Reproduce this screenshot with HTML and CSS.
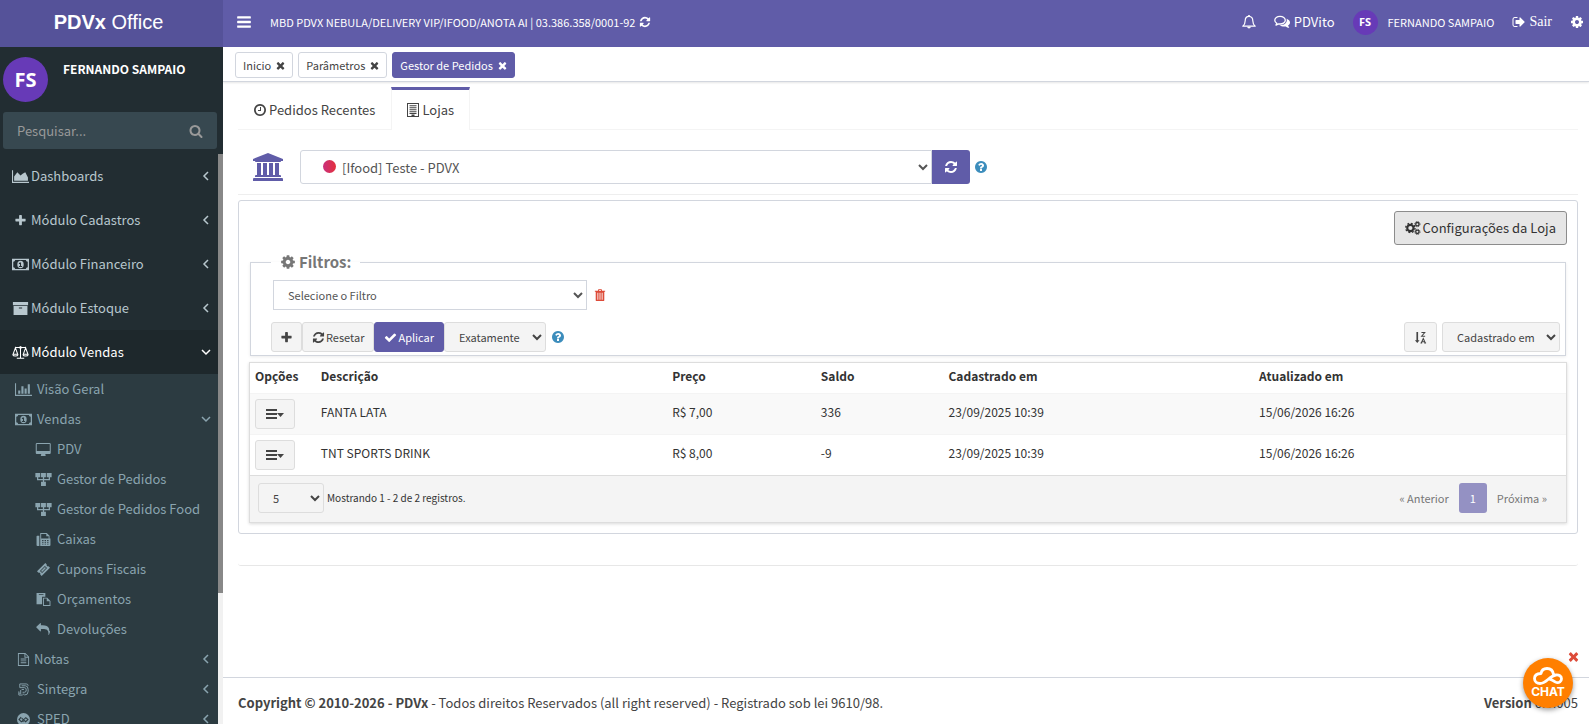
FILE: index.html
```
<!DOCTYPE html>
<html lang="pt-BR">
<head>
  <meta charset="UTF-8">
  <title>PDVx Office</title>
  <link rel="stylesheet" href="styles.css">
</head>
<body>
  <!-- Icon sprite -->
  <svg class="sprite" aria-hidden="true">
    <symbol id="i-bars" viewBox="0 0 1792 1792"><path d="M1664 1344v128q0 26-19 45t-45 19h-1408q-26 0-45-19t-19-45v-128q0-26 19-45t45-19h1408q26 0 45 19t19 45zm0-512v128q0 26-19 45t-45 19h-1408q-26 0-45-19t-19-45v-128q0-26 19-45t45-19h1408q26 0 45 19t19 45zm0-512v128q0 26-19 45t-45 19h-1408q-26 0-45-19t-19-45v-128q0-26 19-45t45-19h1408q26 0 45 19t19 45z"/></symbol>
    <symbol id="i-times" viewBox="190 190 1412 1412"><path d="M1490 1322q0 40-28 68l-136 136q-28 28-68 28t-68-28l-294-294-294 294q-28 28-68 28t-68-28l-136-136q-28-28-28-68t28-68l294-294-294-294q-28-28-28-68t28-68l136-136q28-28 68-28t68 28l294 294 294-294q28-28 68-28t68 28l136 136q28 28 28 68t-28 68l-294 294 294 294q28 28 28 68z"/></symbol>
    <symbol id="i-plus" viewBox="0 0 1792 1792"><path d="M1600 736v192q0 40-28 68t-68 28h-416v416q0 40-28 68t-68 28h-192q-40 0-68-28t-28-68v-416h-416q-40 0-68-28t-28-68v-192q0-40 28-68t68-28h416v-416q0-40 28-68t68-28h192q40 0 68 28t28 68v416h416q40 0 68 28t28 68z"/></symbol>
    <symbol id="i-check" viewBox="0 0 1792 1792"><path d="M1671 566q0 40-28 68l-724 724-136 136q-28 28-68 28t-68-28l-136-136-362-362q-28-28-28-68t28-68l136-136q28-28 68-28t68 28l294 295 656-657q28-28 68-28t68 28l136 136q28 28 28 68z"/></symbol>
    <symbol id="i-refresh" viewBox="0 0 1792 1792"><path d="M1639 1056q0 5-1 7-64 268-268 434.5t-478 166.5q-146 0-282.5-55t-243.5-157l-129 129q-19 19-45 19t-45-19-19-45v-448q0-26 19-45t45-19h448q26 0 45 19t19 45-19 45l-137 137q71 66 161 102t187 36q134 0 250-65t186-179q11-17 53-117 8-23 30-23h192q13 0 22.5 9.5t9.5 22.5zm25-800v448q0 26-19 45t-45 19h-448q-26 0-45-19t-19-45 19-45l138-138q-148-137-349-137-134 0-250 65t-186 179q-11 17-53 117-8 23-30 23h-199q-13 0-22.5-9.5t-9.5-22.5v-7q65-268 270-434.5t480-166.5q146 0 284 55.5t245 156.5l130-129q19-19 45-19t45 19 19 45z"/></symbol>
    <symbol id="i-cog" viewBox="0 0 1792 1792"><path d="M1152 896q0-106-75-181t-181-75-181 75-75 181 75 181 181 75 181-75 75-181zm512-109v222q0 12-8 23t-20 13l-185 28q-19 54-39 91 35 50 107 138 10 12 10 25t-9 23q-27 37-99 108t-94 71q-12 0-26-9l-138-108q-44 23-91 38-16 136-29 186-7 28-36 28h-222q-14 0-24.5-8.5t-11.5-21.5l-28-184q-49-16-90-37l-141 107q-10 9-25 9-14 0-25-11-126-114-165-168-7-10-7-23 0-12 8-23 15-21 51-66.5t54-70.5q-27-50-41-99l-183-27q-13-2-21-12.5t-8-23.5v-222q0-12 8-23t19-13l186-28q14-46 39-92-40-57-107-138-10-12-10-24 0-10 9-23 26-36 98.5-107.5t94.5-71.5q13 0 26 10l138 107q44-23 91-38 16-136 29-186 7-28 36-28h222q14 0 24.5 8.5t11.5 21.5l28 184q49 16 90 37l142-107q9-9 24-9 13 0 25 10 129 119 165 170 7 8 7 22 0 12-8 23-15 21-51 66.5t-54 70.5q26 50 41 98l183 28q13 2 21 12.5t8 23.5z"/></symbol>
    <symbol id="i-cogs" viewBox="0 0 18 16"><g fill="none" stroke="currentColor"><circle cx="6" cy="8" r="3.6" stroke-width="2.4"/><circle cx="6" cy="8" r="5.3" stroke-width="1.6" stroke-dasharray="2.1 2.06"/><circle cx="14" cy="3.6" r="1.9" stroke-width="1.5"/><circle cx="14" cy="3.6" r="3" stroke-width="1" stroke-dasharray="1.3 1.06"/><circle cx="14" cy="12.4" r="1.9" stroke-width="1.5"/><circle cx="14" cy="12.4" r="3" stroke-width="1" stroke-dasharray="1.3 1.06"/></g></symbol>
    <symbol id="i-search" viewBox="0 0 1792 1792"><path d="M1216 832q0-185-131.5-316.5t-316.5-131.5-316.5 131.5-131.5 316.5 131.5 316.5 316.5 131.5 316.5-131.5 131.5-316.5zm512 832q0 52-38 90t-90 38q-54 0-90-38l-343-342q-179 124-399 124-143 0-273.5-55.5t-225-150-150-225-55.5-273.5 55.5-273.5 150-225 225-150 273.5-55.5 273.5 55.5 225 150 150 225 55.5 273.5q0 220-124 399l343 343q37 37 37 90z"/></symbol>
    <symbol id="i-help" viewBox="128 128 1536 1536"><path d="M1024 1376v-192q0-14-9-23t-23-9h-192q-14 0-23 9t-9 23v192q0 14 9 23t23 9h192q14 0 23-9t9-23zm256-672q0-88-55.5-163t-138.5-116-170-41q-243 0-371 213-15 24 8 42l132 100q7 6 19 6 16 0 25-12 53-68 86-92 34-24 86-24 48 0 85.5 26t37.5 59q0 38-20 61t-68 45q-63 28-115.5 86.5t-52.5 125.5v36q0 14 9 23t23 9h192q14 0 23-9t9-23q0-19 21.5-49.5t54.5-49.5q32-18 49-28.5t46-35 44.5-48 28-60.5 12.5-81zm384 192q0 209-103 385.5t-279.5 279.5-385.5 103-385.5-103-279.5-279.5-103-385.5 103-385.5 279.5-279.5 385.5-103 385.5 103 279.5 279.5 103 385.5z"/></symbol>
    <symbol id="i-clock" viewBox="128 128 1536 1536"><path d="M1024 544v448q0 14-9 23t-23 9h-320q-14 0-23-9t-9-23v-64q0-14 9-23t23-9h224v-352q0-14 9-23t23-9h64q14 0 23 9t9 23zm416 352q0-148-73-273t-198-198-273-73-273 73-198 198-73 273 73 273 198 198 273 73 273-73 198-198 73-273zm224 0q0 209-103 385.5t-279.5 279.5-385.5 103-385.5-103-279.5-279.5-103-385.5 103-385.5 279.5-279.5 385.5-103 385.5 103 279.5 279.5 103 385.5z"/></symbol>
    <symbol id="i-out" viewBox="0 0 1792 1792"><path d="M704 1440q0 4 1 20t.5 26.5-3 23.5-10 19.5-20.5 6.5h-320q-119 0-203.5-84.5t-84.5-203.5v-704q0-119 84.5-203.5t203.5-84.5h320q13 0 22.5 9.5t9.5 22.5q0 4 1 20t.5 26.5-3 23.5-10 19.5-20.5 6.5h-320q-66 0-113 47t-47 113v704q0 66 47 113t113 47h312l11.5 1 11.5 3 8 5.5 7 9 2 13.5zm928-544q0 26-19 45l-544 544q-19 19-45 19t-45-19-19-45v-288h-448q-26 0-45-19t-19-45v-384q0-26 19-45t45-19h448v-288q0-26 19-45t45-19 45 19l544 544q19 19 19 45z"/></symbol>
    <symbol id="i-trash" viewBox="0 0 12 14"><path fill-rule="evenodd" d="M4 .5Q4.200 0 4.800 0h2.400q.6 0 .8.5L8.500 2H12v1.300h-1V13q0 1-1 1H2q-1 0-1-1V3.300H0V2h3.500zM5 1l-.3 1h2.600L7 1zM3 4.500v8h1v-8zm2.500 0v8h1v-8zm2.500 0v8h1v-8z"/></symbol>
    <symbol id="i-bank" viewBox="0 0 1920 1792"><path d="M960 0l960 384v128h-128q0 26-20.5 45t-48.5 19h-1526q-28 0-48.5-19t-20.5-45h-128v-128zm-704 640h256v768h128v-768h256v768h128v-768h256v768h128v-768h256v768h59q28 0 48.5 19t20.5 45v64h-1664v-64q0-26 20.5-45t48.5-19h59v-768zm1595 960q28 0 48.5 19t20.5 45v128h-1920v-128q0-26 20.5-45t48.5-19h1782z"/></symbol>
    <symbol id="i-reply" viewBox="0 0 1792 1792"><path d="M1792 1120q0 166-127 451-3 7-10.5 24t-13.5 30-13 22q-12 17-28 17-15 0-23.5-10t-8.5-25q0-9 2.5-26.5t2.5-23.5q5-68 5-123 0-112-19.5-200.5t-54-153.5-89-112-117-79-150.5-46.5-176.5-23-208-6.500h-224v256q0 26-19 45t-45 19-45-19l-512-512q-19-19-19-45t19-45l512-512q19-19 45-19t45 19 19 45v256h224q713 0 875 403 53 134 53 333z"/></symbol>
    <symbol id="i-desktop" viewBox="0 0 1856 1664"><path d="M1728 992v-832q0-13-9.5-22.5t-22.5-9.500h-1600q-13 0-22.5 9.500t-9.500 22.500v832q0 13 9.500 22.500t22.500 9.500h1600q13 0 22.500-9.500t9.500-22.500zm128-832v1088q0 66-47 113t-113 47h-544q0 37 16 77.500t32 71 16 43.500q0 26-19 45t-45 19h-512q-26 0-45-19t-19-45q0-14 16-44t32-70 16-78h-544q-66 0-113-47t-47-113v-1088q0-66 47-113t113-47h1600q66 0 113 47t47 113z"/></symbol>
    <symbol id="i-area" viewBox="0 0 16 12"><path d="M0 0h1v11h15v1H0zM2 10V6l3-4 3 3 2-1.500 2.500-1.500L15 7v3z"/></symbol>
    <symbol id="i-bar-chart" viewBox="0 0 16 12"><path d="M0 0h1v11h15v1H0zM3 7h2v3H3zM6 3h2v7H6zM9 5h2v5H9zM12 1h2v9h-2z"/></symbol>
    <symbol id="i-money" viewBox="0 0 16 11"><path fill-rule="evenodd" d="M0 0h16v11H0zM3 1.200A2 2 0 0 1 1.200 3v5A2 2 0 0 1 3 9.800h10A2 2 0 0 1 14.800 8V3A2 2 0 0 1 13 1.200zM8 2a3 3.500 0 1 1 0 7 3 3.500 0 1 1 0-7zM7.500 3.500L6.500 4.200v.8h1V7h-1v.8h3V7h-1V3.500z"/></symbol>
    <symbol id="i-archive" viewBox="0 0 14 12"><path fill-rule="evenodd" d="M0 0h14v3H0zM.6 3.800h12.800V12H.6zM5.500 5v1h3V5z"/></symbol>
    <symbol id="i-scale" viewBox="0 0 18 14"><path fill="none" stroke="currentColor" stroke-width="1.100" d="M3 1.700h12M9 .5V13M5 13.300h8M3.500 2L1 9h5zM14.500 2L12 9h5zM.6 9.200c.5 2.200 5.200 2.200 5.800 0M11.600 9.200c.5 2.200 5.200 2.200 5.800 0"/><circle cx="9" cy="1.700" r="1.400"/></symbol>
    <symbol id="i-flow" viewBox="0 0 15 12"><path d="M0 0h4.500v4H0zM5.200 0h4.500v4H5.200zM10.500 0H15v4h-4.500zM5.200 8h4.500v4H5.200zM1.500 4h1.200v1.500h4.200V4h1.200v1.500h4.200V4h1.200v2.700H8.100V8H6.900V6.700H1.500z"/></symbol>
    <symbol id="i-fax" viewBox="0 0 15 14"><path fill-rule="evenodd" d="M0 3.500Q0 3 .6 3H3v11H1Q0 14 0 13zM4 0h7l3 3v3h1v7q0 1-1 1H4zM5 1v5h8V3.600h-2.500V1zM6 7.500v1h1.500v-1zm2.700 0v1h1.500v-1zm2.700 0v1h1.500v-1zM6 9.500v1h1.500v-1zm2.700 0v1h1.500v-1zm2.700 0v1h1.500v-1zM6 11.500v1h1.500v-1zm2.700 0v1h1.500v-1zm2.700 0v1h1.500v-1z"/></symbol>
    <symbol id="i-ticket" viewBox="0 0 14 14"><path fill-rule="evenodd" d="M9 0l1.500 1.500a1.500 1.500 0 0 0 2 2L14 5 5 14l-1.500-1.500a1.500 1.500 0 0 0-2-2L0 9zM8.500 3.200L3.200 8.500l2.300 2.300 5.300-5.300zM8.500 4.300l1.200 1.200-4.200 4.200-1.200-1.200z"/></symbol>
    <symbol id="i-paste" viewBox="0 0 15 14"><path fill-rule="evenodd" d="M0 0h9.500v4H6v8H0zM2.500 1v1h5V1zM7 5h4.500L15 8.500V14H7zM8 6v7h6V9h-3V6z"/></symbol>
    <symbol id="i-file" viewBox="0 0 12 14"><path fill-rule="evenodd" d="M0 0h8l4 4v10H0zM1 1v12h10V5H7V1zM8 1.300V4h2.700zM3 6h6v1H3zM3 8h6v1H3zM3 10h6v1H3z"/></symbol>
    <symbol id="i-building" viewBox="0 0 12 14"><path fill-rule="evenodd" d="M0 0h12v14H0zM1 1v12h3.500v-1.500h3V13H11V1zM2.500 2.200h7v1h-7zM2.500 4.200h7v1h-7zM2.500 6.200h7v1h-7zM2.500 8.200h7v1h-7zM2.500 10h7v1h-7z"/></symbol>
    <symbol id="i-sintegra" viewBox="0 0 12 14"><path fill="none" stroke="currentColor" stroke-width="1" d="M2 1h7M2 1v4M4 3h4q3 0 3 4v2q0 4-4 4M2 5h5q2 0 2 2.500T7 10H5M4 7h2.500M3 7.500V12M1 9v4h4M5 12h2M1 11h1M9 1q2 0 2 2"/></symbol>
    <symbol id="i-sped" viewBox="0 0 14 14"><circle cx="7" cy="7" r="7"/><path fill="none" stroke="#2c3b41" stroke-width="1.200" d="M4.500 4.500L2.200 7l2.500 2.500L9.500 5l2.300 2-2.500 2.500L5 5.500M6 8.500l1 1M8.500 9.500l1-1"/></symbol>
    <symbol id="i-bell" viewBox="0 0 14 14"><path fill="none" stroke="currentColor" stroke-width="1.200" stroke-linejoin="round" d="M7 1.400c-2.600 0-3.800 2-3.800 4.400 0 3.200-1 4.300-2.400 5.400h12.400c-1.400-1.100-2.400-2.200-2.400-5.400C10.800 3.400 9.600 1.400 7 1.400z"/><path d="M6.200 0h1.600v1.500H6.200zM5.200 11.700h3.600a1.800 1.800 0 0 1-3.600 0z"/></symbol>
    <symbol id="i-chat" viewBox="0 0 16 13"><path fill="none" stroke="currentColor" stroke-width="1.300" stroke-linejoin="round" d="M6 .8C3 .8.800 2.500.800 4.700c0 1.300.8 2.400 2 3.100L2 9.600l2.700-1.200c4 .5 6.600-1.300 6.600-3.700C11.300 2.500 9 .8 6 .8z"/><path d="M12.600 3.300c2 .7 3.400 2 3.400 3.600 0 1.300-.8 2.300-2 3.100l1.300 2.300c-1.500 0-2.700-.6-3.500-1.400-2.300.4-4.600 0-6.300-1.200 4.500.3 8.200-2 7.100-6.400z"/></symbol>
    <symbol id="i-left" viewBox="0 0 10 10"><path fill="none" stroke="currentColor" stroke-width="1.500" d="M7 1L3 5l4 4"/></symbol>
    <symbol id="i-down" viewBox="0 0 10 10"><path fill="none" stroke="currentColor" stroke-width="1.500" d="M1 3l4 4 4-4"/></symbol>
    <symbol id="i-menu-caret" viewBox="0 0 18 10"><path d="M0 0h11v2H0zM0 4h11v2H0zM0 8h11v2H0zM11 4h7l-3.500 4z"/></symbol>
    <symbol id="i-sort" viewBox="0 0 12 14"><path d="M1.600 1h1.800v9H5l-2.500 3L0 10h1.600z"/><path fill="none" stroke="currentColor" stroke-width="1.100" d="M7 1.600h3.600L7.200 5.600H11M6.800 13L9 8l2.200 5M7.600 11.500h2.800M6 13h1.800M10 13h2"/></symbol>
    <symbol id="i-cloud" viewBox="0 0 30 18"><path fill="none" stroke="currentColor" stroke-width="2.800" stroke-linecap="round" stroke-linejoin="round" d="M20.500 7.500C20 4 17.500 1.500 14 1.500c-3 0-5.500 1.800-6 5-3 .2-6.500 1.500-6.500 5 0 3.200 2.500 5 5.500 5 6.500 0 9-7.500 16-8.500 3-.4 5.500 1.200 5.500 3.800 0 2.700-2.500 4.200-5 3.700-3-.6-4-3-7-3.500"/></symbol>
  </svg>

  <div class="wrapper">
    <!-- Left: logo and menu -->
    <aside class="sidebar">
      <a href="#" class="logo"><b>PDVx</b>&nbsp;Office</a>
      <div class="user-panel">
        <span class="avatar">FS</span>
        <strong>FERNANDO SAMPAIO</strong>
      </div>
      <form class="search">
        <input type="text" placeholder="Pesquisar..." aria-label="Pesquisar">
        <button type="button" aria-label="Buscar"><svg class="icon"><use href="#i-search"/></svg></button>
      </form>
      <div class="menu-scroll">
        <ul class="menu">
          <li><a href="#"><svg class="icon"><use href="#i-area"/></svg><span>Dashboards</span><svg class="arrow"><use href="#i-left"/></svg></a></li>
          <li><a href="#"><svg class="icon"><use href="#i-plus"/></svg><span>Módulo Cadastros</span><svg class="arrow"><use href="#i-left"/></svg></a></li>
          <li><a href="#"><svg class="icon"><use href="#i-money"/></svg><span>Módulo Financeiro</span><svg class="arrow"><use href="#i-left"/></svg></a></li>
          <li><a href="#"><svg class="icon"><use href="#i-archive"/></svg><span>Módulo Estoque</span><svg class="arrow"><use href="#i-left"/></svg></a></li>
          <li class="active">
            <a href="#"><svg class="icon"><use href="#i-scale"/></svg><span>Módulo Vendas</span><svg class="arrow"><use href="#i-down"/></svg></a>
            <ul class="submenu">
              <li><a href="#"><svg class="icon"><use href="#i-bar-chart"/></svg><span>Visão Geral</span></a></li>
              <li>
                <a href="#"><svg class="icon"><use href="#i-money"/></svg><span>Vendas</span><svg class="arrow"><use href="#i-down"/></svg></a>
                <ul class="submenu-inner">
                  <li><a href="#"><svg class="icon"><use href="#i-desktop"/></svg><span>PDV</span></a></li>
                  <li><a href="#"><svg class="icon"><use href="#i-flow"/></svg><span>Gestor de Pedidos</span></a></li>
                  <li><a href="#"><svg class="icon"><use href="#i-flow"/></svg><span>Gestor de Pedidos Food</span></a></li>
                  <li><a href="#"><svg class="icon"><use href="#i-fax"/></svg><span>Caixas</span></a></li>
                  <li><a href="#"><svg class="icon"><use href="#i-ticket"/></svg><span>Cupons Fiscais</span></a></li>
                  <li><a href="#"><svg class="icon"><use href="#i-paste"/></svg><span>Orçamentos</span></a></li>
                  <li><a href="#"><svg class="icon"><use href="#i-reply"/></svg><span>Devoluções</span></a></li>
                </ul>
              </li>
              <li><a href="#" class="tight"><svg class="icon"><use href="#i-file"/></svg><span>Notas</span><svg class="arrow"><use href="#i-left"/></svg></a></li>
              <li><a href="#"><svg class="icon"><use href="#i-sintegra"/></svg><span>Sintegra</span><svg class="arrow"><use href="#i-left"/></svg></a></li>
              <li><a href="#"><svg class="icon"><use href="#i-sped"/></svg><span>SPED</span><svg class="arrow"><use href="#i-left"/></svg></a></li>
            </ul>
          </li>
        </ul>
        <div class="rail"><div class="rail-thumb"></div></div>
      </div>
    </aside>

    <div class="main">
      <header class="navbar">
        <button type="button" class="toggle" aria-label="Menu"><svg class="icon icon-lg"><use href="#i-bars"/></svg></button>
        <a href="#" class="company">MBD PDVX NEBULA/DELIVERY VIP/IFOOD/ANOTA AI | 03.386.358/0001-92 <svg class="icon"><use href="#i-refresh"/></svg></a>
        <nav class="nav-right">
          <a href="#" aria-label="Notificações"><svg class="icon"><use href="#i-bell"/></svg></a>
          <a href="#" class="pdvito"><svg class="icon"><use href="#i-chat"/></svg>PDVito</a>
          <a href="#" class="nav-user"><span class="avatar avatar-sm">FS</span>FERNANDO SAMPAIO</a>
          <a href="#" class="logout"><svg class="icon"><use href="#i-out"/></svg>Sair</a>
          <a href="#" aria-label="Configurações"><svg class="icon"><use href="#i-cog"/></svg></a>
        </nav>
      </header>

      <div class="page-tabs">
        <button type="button" class="page-tab">Inicio <svg class="icon"><use href="#i-times"/></svg></button>
        <button type="button" class="page-tab">Parâmetros <svg class="icon"><use href="#i-times"/></svg></button>
        <button type="button" class="page-tab current">Gestor de Pedidos <svg class="icon"><use href="#i-times"/></svg></button>
      </div>

      <main class="content">
        <div class="box">
          <div class="nav-tabs">
            <a href="#" class="nav-tab"><svg class="icon"><use href="#i-clock"/></svg>Pedidos Recentes</a>
            <a href="#" class="nav-tab current"><svg class="icon"><use href="#i-building"/></svg>Lojas</a>
          </div>

          <div class="store-row">
            <svg class="bank"><use href="#i-bank"/></svg>
            <div class="store-select">
              <span class="dot"></span>
              <select aria-label="Loja"><option>[Ifood] Teste - PDVX</option></select>
              <button type="button" aria-label="Atualizar"><svg class="icon"><use href="#i-refresh"/></svg></button>
            </div>
            <svg class="help"><use href="#i-help"/></svg>
          </div>

          <section class="panel">
            <div class="panel-actions">
              <button type="button" class="btn-config"><svg class="icon icon-wide"><use href="#i-cogs"/></svg>Configurações da Loja</button>
            </div>

            <fieldset class="filters">
              <legend><svg class="icon"><use href="#i-cog"/></svg>Filtros:</legend>
              <div class="filter-row">
                <select class="filter-select" aria-label="Filtro"><option>Selecione o Filtro</option></select>
                <button type="button" class="btn-trash" aria-label="Remover filtro"><svg class="icon"><use href="#i-trash"/></svg></button>
              </div>
              <div class="filter-actions">
                <button type="button" class="btn btn-plus" aria-label="Adicionar"><svg class="icon"><use href="#i-plus"/></svg></button>
                <button type="button" class="btn btn-reset"><svg class="icon"><use href="#i-refresh"/></svg>Resetar</button>
                <button type="button" class="btn btn-apply"><svg class="icon"><use href="#i-check"/></svg>Aplicar</button>
                <select class="btn mode-select" aria-label="Modo"><option>Exatamente</option></select>
                <svg class="help"><use href="#i-help"/></svg>
                <button type="button" class="btn btn-sort" aria-label="Ordem"><svg class="icon"><use href="#i-sort"/></svg></button>
                <select class="btn order-select" aria-label="Ordenar por"><option>Cadastrado em</option></select>
              </div>
            </fieldset>

            <div class="grid">
              <table>
                <thead>
                  <tr>
                    <th class="col-opt">Opções</th>
                    <th class="col-desc">Descrição</th>
                    <th class="col-price">Preço</th>
                    <th class="col-stock">Saldo</th>
                    <th class="col-date">Cadastrado em</th>
                    <th>Atualizado em</th>
                  </tr>
                </thead>
                <tbody>
                  <tr>
                    <td class="cell-opt"><button type="button" class="btn btn-row" aria-label="Opções"><svg class="caret"><use href="#i-menu-caret"/></svg></button></td>
                    <td>FANTA LATA</td>
                    <td>R$ 7,00</td>
                    <td>336</td>
                    <td>23/09/2025 10:39</td>
                    <td>15/06/2026 16:26</td>
                  </tr>
                  <tr>
                    <td class="cell-opt"><button type="button" class="btn btn-row" aria-label="Opções"><svg class="caret"><use href="#i-menu-caret"/></svg></button></td>
                    <td>TNT SPORTS DRINK</td>
                    <td>R$ 8,00</td>
                    <td>-9</td>
                    <td>23/09/2025 10:39</td>
                    <td>15/06/2026 16:26</td>
                  </tr>
                </tbody>
              </table>
              <div class="grid-footer">
                <select class="btn size-select" aria-label="Registros por página"><option>5</option></select>
                <span class="grid-info">Mostrando 1 - 2 de 2 registros.</span>
                <div class="pager">
                  <button type="button">« Anterior</button>
                  <button type="button" class="current">1</button>
                  <button type="button">Próxima »</button>
                </div>
              </div>
            </div>
          </section>
        </div>
      </main>

      <footer class="footer">
        <span><strong>Copyright © 2010-2026 - PDVx</strong> - Todos direitos Reservados (all right reserved) - Registrado sob lei 9610/98.</span>
        <span><strong>Version</strong> 6.0.005</span>
      </footer>
    </div>
  </div>

  <!-- Floating chat -->
  <div class="chat">
    <button type="button" class="chat-close" aria-label="Fechar chat"><svg class="icon"><use href="#i-times"/></svg></button>
    <button type="button" class="chat-open"><svg class="cloud"><use href="#i-cloud"/></svg>CHAT</button>
  </div>
</body>
</html>
```

FILE: styles.css
```
* {
  box-sizing: border-box;
}
body {
  margin: 0;
  font-family: "Noto Sans CJK SC", "Noto Sans", sans-serif;
  font-size: 13px;
  line-height: 20px;
  color: #333;
  background-color: #fff;
}
a {
  color: inherit;
  text-decoration: none;
}
button, input, select {
  font: inherit;
  color: inherit;
  margin: 0;
}
button {
  display: inline-flex;
  align-items: center;
  justify-content: center;
  padding: 0;
  border: 0;
  background: none;
}
ul {
  list-style: none;
  margin: 0;
  padding: 0;
}
svg {
  fill: currentColor;
  flex: none;
}
.sprite {
  display: none;
}
.icon {
  width: 14px;
  height: 14px;
}
.icon-lg {
  width: 16px;
  height: 16px;
}
.icon-wide {
  width: 16px;
}
.wrapper {
  display: flex;
  height: 100vh;
  overflow: hidden;
}

/* Sidebar */
.sidebar {
  width: 223px;
  flex: none;
  display: flex;
  flex-direction: column;
  background-color: #222d32;
  color: #b8c7ce;
}
.logo {
  height: 47px;
  flex: none;
  display: flex;
  align-items: center;
  justify-content: center;
  background-color: #555299;
  color: #fff;
  font-family: "Liberation Sans", Arial, sans-serif;
  font-size: 20px;
  padding-bottom: 3px;
  padding-right: 6px;
}
.user-panel {
  display: flex;
  gap: 15px;
  padding: 10px 3px;
  color: #fff;
  font-size: 12px;
  line-height: 24px;
}
.avatar {
  width: 45px;
  height: 45px;
  flex: none;
  display: flex;
  align-items: center;
  justify-content: center;
  border-radius: 50%;
  background-color: #673ab7;
  color: #fff;
  font-family: "Open Sans", sans-serif;
  font-size: 20px;
  font-weight: bold;
}
.avatar-sm {
  width: 25px;
  height: 25px;
  font-size: 11px;
}
.search {
  display: flex;
  height: 37px;
  margin: 0 6px 5px 3px;
  border-radius: 3px;
  background-color: #374850;
  color: #999;
}
.search input {
  flex: 1;
  min-width: 0;
  padding: 0 14px;
  border: 0;
  background: none;
}
.search input::placeholder {
  color: #999;
}
.search button {
  width: 42px;
}
.menu-scroll {
  flex: 1;
  min-height: 0;
  display: flex;
  overflow: hidden;
}
.menu {
  flex: 1;
}
.menu a {
  display: flex;
  align-items: center;
  height: 44px;
  gap: 2px;
  padding: 0 7px 0 12px;
}
.menu .icon {
  width: 17px;
  height: 13px;
}
.menu .arrow {
  width: 10px;
  height: 10px;
  margin-left: auto;
}
.menu .active > a {
  background-color: #1e282c;
  color: #fff;
}
.submenu {
  background-color: #2c3b41;
  color: #8aa4af;
}
.menu .submenu a {
  height: 30px;
  gap: 5px;
  padding-left: 15px;
}
.menu .submenu .tight {
  gap: 2px;
}
.menu .submenu-inner a {
  padding-left: 35px;
}
.rail {
  width: 5px;
  background-color: #f1f1f1;
}
.rail-thumb {
  height: 77%;
  background-color: #888;
}

/* Top bar */
.main {
  flex: 1;
  min-width: 0;
  display: flex;
  flex-direction: column;
}
.navbar {
  height: 47px;
  flex: none;
  display: flex;
  align-items: center;
  padding: 0 5px 3px 13px;
  background-color: #605ca8;
  color: #fff;
}
.company {
  display: flex;
  align-items: center;
  gap: 4px;
  margin-left: 18px;
  font-size: 11px;
}
.company .icon {
  width: 12px;
  height: 12px;
}
.nav-right {
  margin-left: auto;
  display: flex;
  align-items: center;
  gap: 18px;
}
.nav-right a {
  display: flex;
  align-items: center;
  gap: 4px;
}
.nav-right .pdvito .icon {
  width: 16px;
}
.nav-right .nav-user {
  gap: 10px;
  font-size: 11px;
}
.nav-right .logout {
  gap: 3px;
  font-family: "Liberation Serif", "Times New Roman", serif;
  font-size: 14px;
}

/* Open pages */
.page-tabs {
  display: flex;
  gap: 5px;
  padding: 5px 12px 3px;
  border-bottom: 1px solid #d2d6de;
  box-shadow: 0 1px 2px rgba(0, 0, 0, 0.1);
}
.page-tab {
  height: 26px;
  gap: 5px;
  padding: 0 7px;
  border: 1px solid #d2d6de;
  border-radius: 3px;
  font-size: 11px;
  color: #444;
}
.page-tab .icon {
  width: 9px;
  height: 9px;
}
.page-tab.current {
  background-color: #605ca8;
  border-color: #605ca8;
  color: #fff;
}

/* Content */
.content {
  flex: 1;
  padding: 5px 11px 0 15px;
}
.box {
  padding-bottom: 31px;
  border-bottom: 1px solid #e7e7e7;
  border-radius: 3px;
}
.nav-tabs {
  display: flex;
  border-bottom: 1px solid #f4f4f4;
}
.nav-tab {
  display: flex;
  align-items: center;
  gap: 3px;
  height: 43px;
  padding: 0 16px;
  margin-bottom: -1px;
  border-top: 3px solid transparent;
  color: #444;
}
.nav-tab .icon {
  width: 12px;
}
.nav-tab.current {
  padding: 0 15px;
  border-top-color: #605ca8;
  border-left: 1px solid #f4f4f4;
  border-right: 1px solid #f4f4f4;
  background-color: #fff;
}
.store-row {
  display: flex;
  align-items: center;
  padding: 20px 15px 10px;
  border-bottom: 1px solid #eee;
}
.bank {
  width: 30px;
  height: 28px;
  color: #605ca8;
}
.store-select {
  position: relative;
  display: flex;
  width: 52%;
  height: 34px;
  margin: 0 5px 0 17px;
  max-width: 670px;
  color: #555;
}
.store-select select {
  flex: 1;
  padding: 0 0 0 37px;
  border: 1px solid #d2d6de;
  border-radius: 3px 0 0 3px;
  background-color: #fff;
}
.store-select button {
  width: 38px;
  border-radius: 0 3px 3px 0;
  background-color: #605ca8;
  color: #fff;
}
/* Brand dot over the select */
.dot {
  position: absolute;
  left: 23px;
  top: 10px;
  width: 13px;
  height: 13px;
  border-radius: 50%;
  background-color: #d81b60;
  background-image: linear-gradient(90deg, #c9307c, #e4303c);
}
.help {
  width: 12px;
  height: 12px;
  color: #3c8dbc;
}
.panel {
  margin-top: 5px;
  padding: 10px;
  border: 1px solid #d2d6de;
  border-radius: 3px;
}
.panel-actions {
  display: flex;
  justify-content: flex-end;
}
.btn-config {
  height: 34px;
  gap: 2px;
  padding: 0 10px;
  border: 1px solid #8c8c8c;
  border-radius: 3px;
  background-color: #e6e6e6;
}
.filters {
  margin: 7px 1px 6px;
  padding: 8px 5px 3px 20px;
  border: 1px solid #d2d6de;
  box-shadow: 0 1px 3px rgba(0, 0, 0, 0.08);
}
.filters legend {
  display: flex;
  align-items: center;
  gap: 3px;
  padding: 0 9px;
  color: #777;
  font-size: 15px;
  font-weight: bold;
}
.filters legend .icon {
  width: 16px;
  height: 16px;
}
.filter-row {
  display: flex;
  align-items: center;
  gap: 6px;
  padding-left: 2px;
  margin-bottom: 12px;
  font-size: 11px;
}
.filter-select {
  width: 24.4%;
  height: 30px;
  padding: 0 0 0 10px;
  border: 1px solid #d2d6de;
  border-radius: 0;
  background-color: #fff;
  color: #555;
}
.btn-trash {
  color: #dd4b39;
}
.btn-trash .icon {
  height: 12px;
}
.filter-actions {
  display: flex;
  align-items: center;
}
.filter-actions .help {
  margin-left: 6px;
}
.btn {
  height: 30px;
  border: 1px solid #ddd;
  border-radius: 3px;
  background-color: #f4f4f4;
  color: #444;
  font-size: 11px;
}
.btn .icon {
  width: 13px;
  height: 13px;
}
.btn-plus {
  width: 31px;
}
.btn-reset, .btn-apply {
  gap: 1px;
  padding: 0 9px;
}
.btn-apply {
  background-color: #605ca8;
  border-color: #605ca8;
  color: #fff;
}
.mode-select {
  width: 102px;
  padding-left: 10px;
}
.btn-sort {
  width: 33px;
  margin-left: auto;
  margin-right: 5px;
}
.order-select {
  width: 118px;
  padding-left: 10px;
}

/* Records */
.grid {
  border: 1px solid #ddd;
  box-shadow: 0 1px 3px rgba(0, 0, 0, 0.15);
  font-size: 12px;
}
table {
  width: 100%;
  border-collapse: collapse;
  table-layout: fixed;
}
th, td {
  padding: 0 5px 4px;
  text-align: left;
}
th {
  height: 30px;
}
tbody tr {
  height: 41px;
  border-top: 1px solid #f4f4f4;
}
tbody tr:nth-child(odd) {
  background-color: #f9f9f9;
}
.cell-opt {
  padding: 5px;
}
.col-opt {
  width: 5%;
}
.col-desc {
  width: 26.7%;
}
.col-price {
  width: 11.3%;
}
.col-stock {
  width: 9.7%;
}
.col-date {
  width: 23.6%;
}
.btn-row {
  display: flex;
  width: 40px;
}
.caret {
  width: 18px;
  height: 10px;
}
.grid-footer {
  display: flex;
  align-items: center;
  height: 47px;
  padding: 0 9px 2px 8px;
  border-top: 1px solid #ddd;
  background-color: #f4f4f4;
  font-size: 11px;
}
.size-select {
  width: 66px;
  padding-left: 10px;
  margin-right: 3px;
}
.grid-info {
  font-size: 10px;
}
.pager {
  display: flex;
  margin-left: auto;
  color: #777;
}
.pager button {
  height: 30px;
  padding: 0 10px;
}
.pager .current {
  width: 28px;
  border-radius: 3px;
  background-color: #9491c3;
  color: #fff;
}
.footer {
  display: flex;
  align-items: center;
  justify-content: space-between;
  height: 47px;
  padding: 4px 11px 0 15px;
  border-top: 1px solid #d2d6de;
  color: #444;
}

/* Chat button floating over the page */
.chat {
  position: absolute;
  right: 10px;
  bottom: 16px;
  display: flex;
  flex-direction: column;
  align-items: flex-end;
}
.chat-close {
  color: #dd4b39;
  margin-bottom: -4px;
}
.chat-close .icon {
  width: 11px;
  height: 11px;
}
.chat-open {
  flex-direction: column;
  width: 50px;
  height: 50px;
  margin-right: 6px;
  border-radius: 50%;
  background-color: #ff7f00;
  color: #fff;
  font-family: Inter, sans-serif;
  font-size: 12px;
  font-weight: bold;
  line-height: 14px;
  box-shadow: 0 2px 5px rgba(0, 0, 0, 0.4);
}
.cloud {
  width: 30px;
  height: 18px;
}
```
